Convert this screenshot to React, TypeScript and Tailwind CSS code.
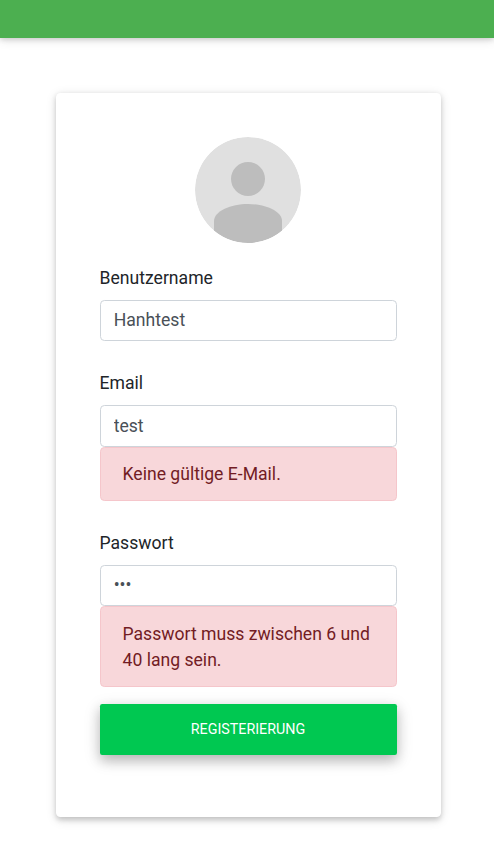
import type { ReactNode } from 'react';

function Avatar() {
  return (
    <svg viewBox="0 0 106 106" className="mx-auto block size-[106px] rounded-full" aria-hidden="true">
      <circle cx="53" cy="53" r="53" fill="#e0e0e0" />
      <clipPath id="avatar-clip">
        <circle cx="53" cy="53" r="53" />
      </clipPath>
      <circle cx="53" cy="42" r="17" fill="#bdbdbd" />
      <path
        clipPath="url(#avatar-clip)"
        d="M19 106V84C19 74 36 67 53 67s34 7 34 17v22z"
        fill="#bdbdbd"
      />
    </svg>
  );
}

type FieldProps = {
  id: string;
  label: string;
  type?: string;
  value: string;
  inputClass: string;
  children?: ReactNode;
};

function Field({ id, label, type = 'text', value, inputClass, children }: FieldProps) {
  return (
    <div>
      <label htmlFor={id} className="mb-[9px] block h-[26px] leading-[26px] text-[#212529]">
        {label}
      </label>
      <input
        id={id}
        type={type}
        defaultValue={value}
        className={`block w-full rounded-[4.4px] border border-[#ced4da] bg-white px-[13.2px] text-[#495057] outline-none ${inputClass}`}
      />
      {children}
    </div>
  );
}

function Alert({ className, children }: { className: string; children: ReactNode }) {
  return (
    <div
      role="alert"
      className={`rounded-[4.4px] border border-[#f5c6cb] bg-[#f8d7da] px-[22px] leading-[26.4px] text-[#721c24] ${className}`}
    >
      {children}
    </div>
  );
}

export default function App() {
  return (
    <div className="min-h-[844px] bg-white font-['Roboto',sans-serif] text-[17.6px]">
      <nav className="h-[38px] bg-[#4caf50] shadow-[0_2.2px_5.5px_rgba(0,0,0,0.16),0_2.2px_11px_rgba(0,0,0,0.12)]" />
      <main className="ml-[55.5px] mt-[55px] h-[724px] w-[385px] rounded-[4.4px] bg-white px-[44px] pt-[44px] shadow-[0_2.2px_5.5px_rgba(0,0,0,0.16),0_2.2px_11px_rgba(0,0,0,0.12)]">
        <Avatar />
        <form className="mt-[22px]" onSubmit={(e) => e.preventDefault()}>
          <Field id="username" label="Benutzername" value="Hanhtest" inputClass="h-[41px] pb-[2px]" />
          <div className="mt-[29px]">
            <Field id="email" label="Email" value="test" inputClass="h-[42px]">
              <Alert className="h-[54px] pt-[13px]">Keine gültige E-Mail.</Alert>
            </Field>
          </div>
          <div className="mt-[29px]">
            <Field id="password" label="Passwort" type="password" value="123" inputClass="h-[41px] pb-[2px]">
              <Alert className="h-[81px] pt-[14px]">Passwort muss zwischen 6 und 40 lang sein.</Alert>
            </Field>
          </div>
          <button
            type="submit"
            className="mt-[17px] block h-[51px] w-full rounded-[2.2px] bg-[#00c851] text-[14.3px] uppercase text-white shadow-[0_5.5px_12.1px_rgba(0,0,0,0.18),0_4.4px_16.5px_rgba(0,0,0,0.15)]"
          >
            Registerierung
          </button>
        </form>
      </main>
    </div>
  );
}
